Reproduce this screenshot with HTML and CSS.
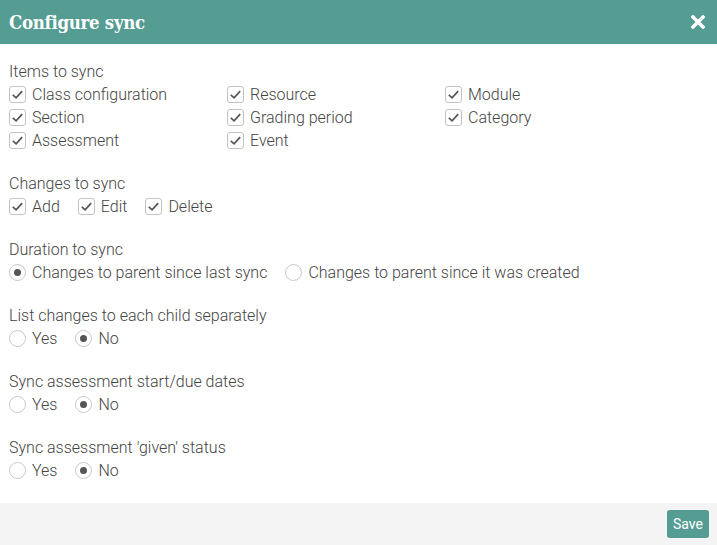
FILE: index.html
```html
<!DOCTYPE html>
<html>
<head>
<meta charset="utf-8">
<link rel="stylesheet" href="styles.css">
</head>
<body>
<div class="dialog">
  <div class="header">
    <div class="title">Configure sync</div>
    <div class="close"><svg width="14" height="14" viewBox="0 0 14 14"><path d="M2 2 L12 12 M12 2 L2 12" stroke="#fff" stroke-width="3.4" stroke-linecap="square"/></svg></div>
  </div>
  <div class="content">
    <div class="group">
      <div class="label">Items to sync</div>
      <div class="grid">
        <div class="opt"><span class="cb"><svg viewBox="0 0 16 16"><path d="M3 8.3 L6.5 11.6 L13 4.4" fill="none" stroke="#555" stroke-width="1.8"/></svg></span>Class configuration</div>
        <div class="opt"><span class="cb"><svg viewBox="0 0 16 16"><path d="M3 8.3 L6.5 11.6 L13 4.4" fill="none" stroke="#555" stroke-width="1.8"/></svg></span>Resource</div>
        <div class="opt"><span class="cb"><svg viewBox="0 0 16 16"><path d="M3 8.3 L6.5 11.6 L13 4.4" fill="none" stroke="#555" stroke-width="1.8"/></svg></span>Module</div>
        <div class="opt"><span class="cb"><svg viewBox="0 0 16 16"><path d="M3 8.3 L6.5 11.6 L13 4.4" fill="none" stroke="#555" stroke-width="1.8"/></svg></span>Section</div>
        <div class="opt"><span class="cb"><svg viewBox="0 0 16 16"><path d="M3 8.3 L6.5 11.6 L13 4.4" fill="none" stroke="#555" stroke-width="1.8"/></svg></span>Grading period</div>
        <div class="opt"><span class="cb"><svg viewBox="0 0 16 16"><path d="M3 8.3 L6.5 11.6 L13 4.4" fill="none" stroke="#555" stroke-width="1.8"/></svg></span>Category</div>
        <div class="opt"><span class="cb"><svg viewBox="0 0 16 16"><path d="M3 8.3 L6.5 11.6 L13 4.4" fill="none" stroke="#555" stroke-width="1.8"/></svg></span>Assessment</div>
        <div class="opt"><span class="cb"><svg viewBox="0 0 16 16"><path d="M3 8.3 L6.5 11.6 L13 4.4" fill="none" stroke="#555" stroke-width="1.8"/></svg></span>Event</div>
      </div>
    </div>
    <div class="group">
      <div class="label">Changes to sync</div>
      <div class="row">
        <div class="opt"><span class="cb"><svg viewBox="0 0 16 16"><path d="M3 8.3 L6.5 11.6 L13 4.4" fill="none" stroke="#555" stroke-width="1.8"/></svg></span>Add</div>
        <div class="opt"><span class="cb"><svg viewBox="0 0 16 16"><path d="M3 8.3 L6.5 11.6 L13 4.4" fill="none" stroke="#555" stroke-width="1.8"/></svg></span>Edit</div>
        <div class="opt"><span class="cb"><svg viewBox="0 0 16 16"><path d="M3 8.3 L6.5 11.6 L13 4.4" fill="none" stroke="#555" stroke-width="1.8"/></svg></span>Delete</div>
      </div>
    </div>
    <div class="group">
      <div class="label">Duration to sync</div>
      <div class="row">
        <div class="opt"><span class="rb on"></span>Changes to parent since last sync</div>
        <div class="opt"><span class="rb"></span>Changes to parent since it was created</div>
      </div>
    </div>
    <div class="group">
      <div class="label">List changes to each child separately</div>
      <div class="row">
        <div class="opt"><span class="rb"></span>Yes</div>
        <div class="opt"><span class="rb on"></span>No</div>
      </div>
    </div>
    <div class="group">
      <div class="label">Sync assessment start/due dates</div>
      <div class="row">
        <div class="opt"><span class="rb"></span>Yes</div>
        <div class="opt"><span class="rb on"></span>No</div>
      </div>
    </div>
    <div class="group last">
      <div class="label">Sync assessment 'given' status</div>
      <div class="row">
        <div class="opt"><span class="rb"></span>Yes</div>
        <div class="opt"><span class="rb on"></span>No</div>
      </div>
    </div>
  </div>
  <div class="footer">
    <button class="save">Save</button>
  </div>
</div>
</body>
</html>
```
FILE: styles.css
```css
html, body {
  margin: 0;
  padding: 0;
  background: #fff;
}
body {
  font-family: Roboto, "Liberation Sans", sans-serif;
  font-size: 16px;
  font-weight: 300;
  color: #444;
  width: 717px;
  height: 545px;
  overflow: hidden;
}
.dialog {
  display: flex;
  flex-direction: column;
  height: 545px;
}
.header {
  height: 44px;
  background: #559c93;
  display: flex;
  align-items: center;
  justify-content: space-between;
  padding: 0 12px 0 9px;
  flex: none;
}
.title {
  font-family: "DejaVu Serif", serif;
  font-weight: bold;
  font-size: 18.5px;
  font-stretch: condensed;
  color: #fff;
  letter-spacing: -0.3px;
}
.close {
  display: flex;
  width: 14px;
  height: 14px;
}
.content {
  flex: 1;
  padding: 16px 9px 0 9px;
}
.group {
  margin-bottom: 20px;
}
.label {
  line-height: 23px;
  height: 23px;
}
.grid {
  display: grid;
  grid-template-columns: 218px 218px 1fr;
}
.row {
  display: flex;
  gap: 18px;
}
.opt {
  display: flex;
  align-items: center;
  height: 23px;
  line-height: 23px;
}
.cb {
  width: 15px;
  height: 15px;
  border: 1px solid #c2c2c2;
  border-radius: 3px;
  margin-right: 6px;
  display: flex;
  flex: none;
}
.cb svg {
  width: 15px;
  height: 15px;
}
.rb {
  width: 15px;
  height: 15px;
  border: 1px solid #c8c8c8;
  border-radius: 50%;
  margin-right: 6px;
  display: flex;
  align-items: center;
  justify-content: center;
  flex: none;
}
.rb.on::after {
  content: "";
  width: 7px;
  height: 7px;
  border-radius: 50%;
  background: #555;
}
.footer {
  flex: none;
  height: 42px;
  background: #f4f4f4;
  display: flex;
  align-items: center;
  justify-content: flex-end;
  padding: 0 8px;
}
.save {
  font-family: Roboto, "Liberation Sans", sans-serif;
  font-size: 14px;
  font-weight: 400;
  color: #fff;
  background: #559c93;
  border: none;
  border-radius: 3px;
  height: 28px;
  padding: 0 6px;
}
```
